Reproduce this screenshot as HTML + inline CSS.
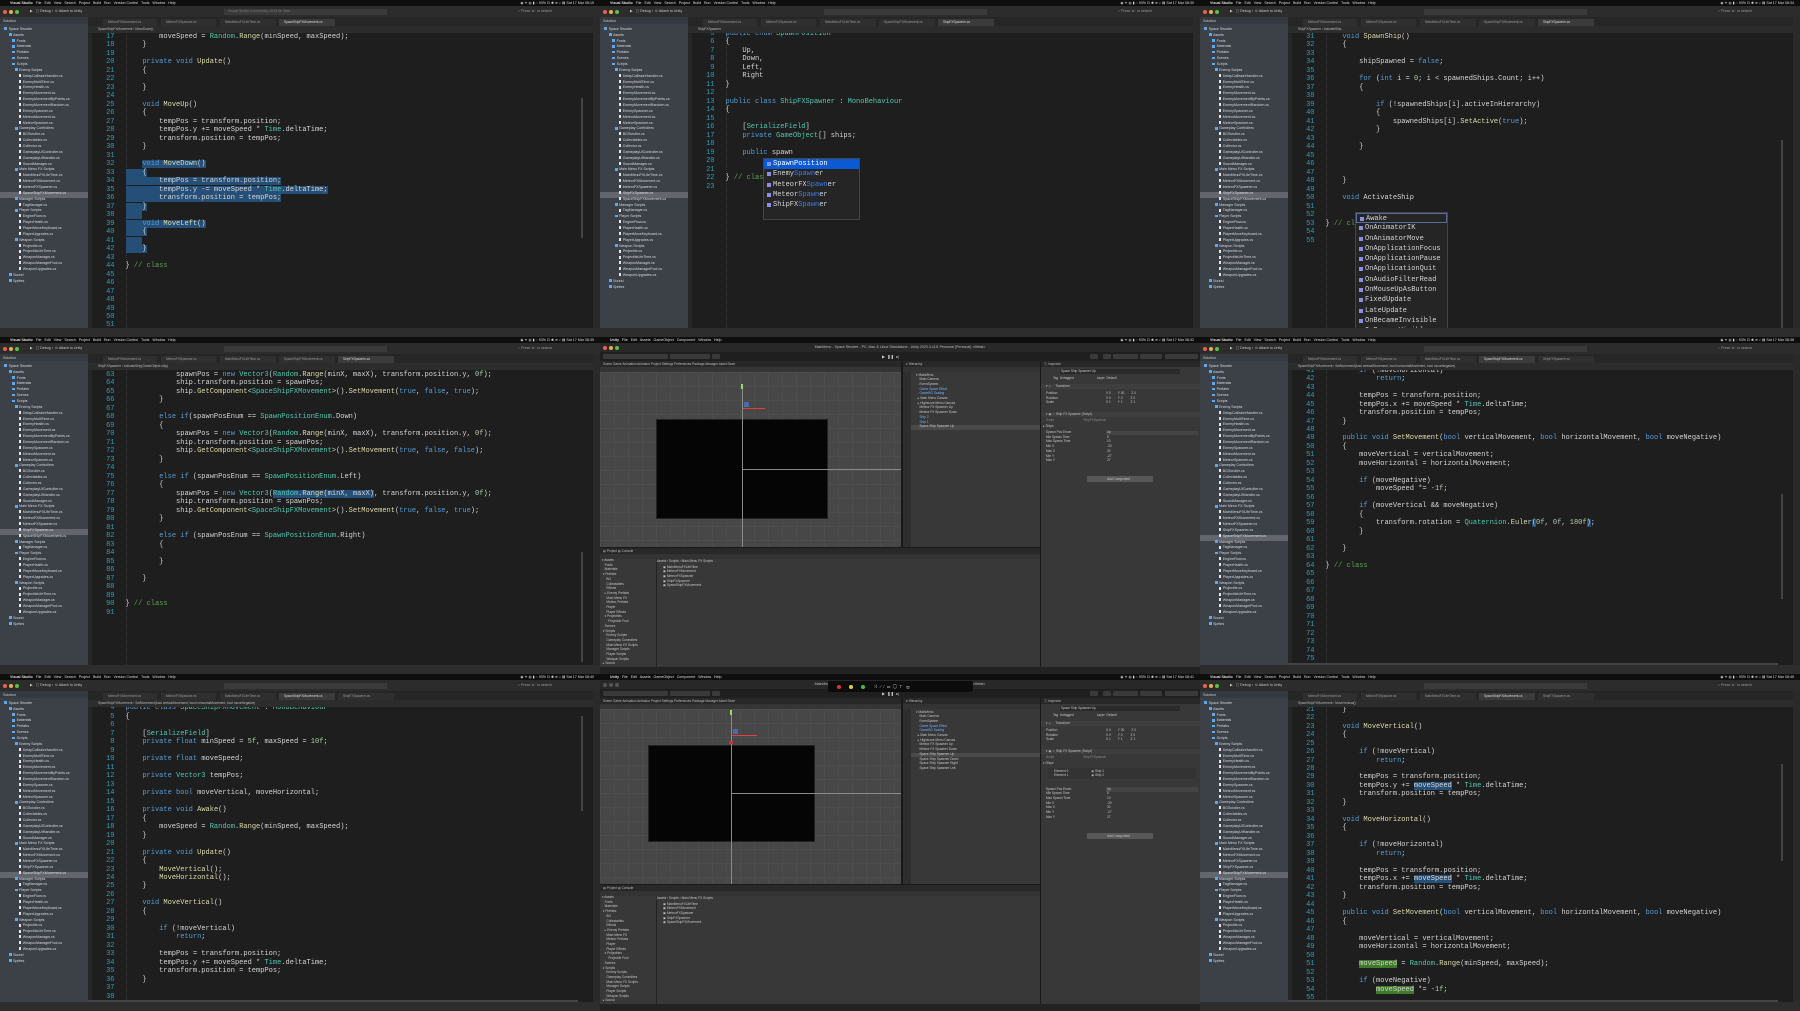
<!DOCTYPE html>
<html><head><meta charset="utf-8">
<style>
*{margin:0;padding:0;box-sizing:border-box}
body{width:1800px;height:1011px;background:#000;position:relative;overflow:hidden;font-family:"Liberation Sans",sans-serif}
.cell{position:absolute;width:600px;height:337px;overflow:hidden;background:#1e1e1e}
.a{position:absolute}
.mb{position:absolute;left:0;top:0;width:600px;height:6px;background:#0e0e0e;color:#ddd;font-size:3.6px;line-height:6px;white-space:pre;padding-left:8px}
.mb b{font-weight:bold}
.mbr{position:absolute;right:6px;top:0;font-size:3.6px;line-height:6px;color:#ddd}
.tb{position:absolute;left:0;top:6px;width:600px;height:11px;background:#2c2c2c}
.dot{position:absolute;width:4px;height:4px;border-radius:50%}
.r{background:#ec5f57}.y{background:#e0b33a}.g{background:#5bbf45}
.tiny{font-size:3.6px;color:#c8c8c8;white-space:pre;position:absolute}
.sp{position:absolute;left:0;top:17px;width:88px;height:311px;background:#3c4047}
.sph{position:absolute;left:0;top:0;width:88px;height:7px;background:#353a40}
.tree{position:absolute;left:0;top:9.8px;width:88px;font-size:3.6px;line-height:5.87px;color:#d6d9de;white-space:nowrap}
.tree div{height:5.87px}
.tree i{display:inline-block;width:3px;height:2.6px;background:#5fa8ee;margin-right:1.6px;vertical-align:-0.2px}
.tree i.d{background:#e6e6e6;width:2.2px;height:3px}
.l0{padding-left:4px}.l1{padding-left:8.5px}.l2{padding-left:12px}.l3{padding-left:14.5px}.l4{padding-left:19px}
.sel{position:absolute;left:0;width:88px;height:5.6px;background:#63676d}
.tabs{position:absolute;left:88px;top:17px;width:512px;height:9px;background:#262626}
.tab{position:absolute;top:2px;height:7px;background:#2f2f2f;font-size:3.2px;line-height:7px;color:#999;padding-left:5px}
.tab.on{background:#3b3b3b;color:#ddd}
.bc{position:absolute;left:88px;top:26px;width:505px;height:7px;background:#2c2c2c;font-size:3.2px;line-height:7px;color:#bbb;padding-left:10px}
.code{position:absolute;left:88px;top:33px;width:505px;height:295px;overflow:hidden;background:#1e1e1e}
.gut{position:absolute;left:0;top:0;width:4px;height:295px;background:#262626}
pre{position:absolute;font-family:"Liberation Mono",monospace;font-size:7.03px;line-height:8.48px;margin:0}
.ln{left:0;width:26.5px;text-align:right;color:#2f9dbd}
.src{left:37.5px;color:#d4d4d4}
.k{color:#569cd6}.t{color:#4ec9b0}.m{color:#dcdcaa}.c{color:#57a64a}.n{color:#b5cea8}
.s{background:#264f78}.hg{background:#3f7a2a}
.guide{position:absolute;top:0;width:0;height:295px;border-left:1px dotted #3a3a3a}
.rs{position:absolute;left:593px;top:17px;width:7px;height:311px;background:#2a2a2a}
.vsb{position:absolute;left:581px;width:2px;background:#444}
.st{position:absolute;left:0;top:328px;width:600px;height:9px;background:#2d2d2d}
.pop{position:absolute;background:#252526;border:1px solid #454545;font-family:"Liberation Mono",monospace;font-size:7px;color:#d4d4d4}
.pop div{height:10.3px;line-height:10.3px;padding-left:9px;position:relative}
.pop div:before{content:"";position:absolute;left:2.5px;top:3px;width:4px;height:4px;background:#8a8fe6}
.pop .hi{background:#0b5ad3;color:#fff}
.pop em{font-style:normal;color:#3b7de8}
/* unity */
.ucell{background:#383838}
.ut{position:absolute;left:0;top:6px;width:600px;height:9px;background:#282828;font-size:3.6px;line-height:9px;color:#bbb;text-align:center}
.utool{position:absolute;left:0;top:15px;width:600px;height:9px;background:#1f1f1f}
.ub{position:absolute;top:2px;height:5px;background:#3a3a3a;border-radius:1px}
.phead{position:absolute;height:6px;background:#282828;font-size:3.2px;line-height:6px;color:#bbb;padding-left:3px}
.scene{position:absolute;left:0;top:35px;width:301px;height:175px;background:#474747;overflow:hidden;
 background-image:linear-gradient(#4d4d4d 1px,transparent 1px),linear-gradient(90deg,#4d4d4d 1px,transparent 1px);background-size:14px 14px}
.game{position:absolute;background:#050505;border:1px solid #222}
.utx{position:absolute;font-size:3.2px;color:#c4c4c4;white-space:pre;line-height:4.7px}
.fld{position:absolute;height:4.5px;background:#2a2a2a}
</style></head><body>

<!-- ============ CELL 1 (0,0) ============ -->
<div class="cell" style="left:0;top:0">
 <div class="mb"><b>  Visual Studio</b>   File   Edit   View   Search   Project   Build   Run   Version Control   Tools   Window   Help</div>
 <div class="mbr">◉ ✦ ◍ ▮ ◌ 93% ⊡ ✱ ≋ ⌕ ▤  Sat 17 Mar 08:15</div>
 <div class="tb"><div class="dot r" style="left:3px;top:4px"></div><div class="dot y" style="left:9px;top:4px"></div><div class="dot g" style="left:15px;top:4px"></div>
  <div class="tiny" style="left:30px;top:3px">▶   ▢ Debug ›  ⊙ Attach to Unity</div>
  <div class="a" style="left:224px;top:3px;width:163px;height:6px;background:#3a3a3a"></div>
  <div class="tiny" style="left:228px;top:3px;color:#777">Visual Studio Community 2019 for Mac</div>
  <div class="tiny" style="left:518px;top:3px;color:#999">⌕ Press '⌘.' to search</div></div>
 <div class="sp"><div class="sph"><span class="tiny" style="left:3px;top:2px">Solution</span></div>
  <div class="sel" style="top:175px"></div>
  <div class="tree">
   <div class="l0"><i></i>Space Shooter</div><div class="l1"><i></i>Assets</div>
   <div class="l2"><i></i>Fonts</div><div class="l2"><i></i>Materials</div><div class="l2"><i></i>Prefabs</div><div class="l2"><i></i>Scenes</div><div class="l2"><i></i>Scripts</div>
   <div class="l3"><i></i>Enemy Scripts</div>
   <div class="l4"><i class="d"></i>DelayCollisionHandler.cs</div><div class="l4"><i class="d"></i>EnemyMultiTime.cs</div><div class="l4"><i class="d"></i>EnemyHealth.cs</div><div class="l4"><i class="d"></i>EnemyMovement.cs</div><div class="l4"><i class="d"></i>EnemyMovementByPoints.cs</div><div class="l4"><i class="d"></i>EnemyMovementRandom.cs</div><div class="l4"><i class="d"></i>EnemySpawner.cs</div><div class="l4"><i class="d"></i>MeteorMovement.cs</div><div class="l4"><i class="d"></i>MeteorSpawner.cs</div>
   <div class="l3"><i></i>Gameplay Controllers</div>
   <div class="l4"><i class="d"></i>BGScroller.cs</div><div class="l4"><i class="d"></i>Collectables.cs</div><div class="l4"><i class="d"></i>Collector.cs</div><div class="l4"><i class="d"></i>GameplayUIController.cs</div><div class="l4"><i class="d"></i>GameplayUIHandler.cs</div><div class="l4"><i class="d"></i>SoundManager.cs</div>
   <div class="l3"><i></i>Main Menu FX Scripts</div>
   <div class="l4"><i class="d"></i>MainMenuFXLifeTime.cs</div><div class="l4"><i class="d"></i>MeteorFXMovement.cs</div><div class="l4"><i class="d"></i>MeteorFXSpawner.cs</div><div class="l4"><i class="d"></i>SpaceShipFXMovement.cs</div>
   <div class="l3"><i></i>Manager Scripts</div><div class="l4"><i class="d"></i>TagManager.cs</div>
   <div class="l3"><i></i>Player Scripts</div>
   <div class="l4"><i class="d"></i>EngineFlow.cs</div><div class="l4"><i class="d"></i>PlayerHealth.cs</div><div class="l4"><i class="d"></i>PlayerMoveKeyboard.cs</div><div class="l4"><i class="d"></i>PlayerUpgrades.cs</div>
   <div class="l3"><i></i>Weapon Scripts</div>
   <div class="l4"><i class="d"></i>Projectile.cs</div><div class="l4"><i class="d"></i>ProjectileLifeTime.cs</div><div class="l4"><i class="d"></i>WeaponManager.cs</div><div class="l4"><i class="d"></i>WeaponManagerPool.cs</div><div class="l4"><i class="d"></i>WeaponUpgrades.cs</div>
   <div class="l1"><i></i>Sound</div><div class="l1"><i></i>Sprites</div>
  </div></div>
 <div class="tabs"><div class="tab" style="left:15px;width:54px">MeteorFXMovement.cs</div><div class="tab" style="left:73px;width:55px">MeteorFXSpawner.cs</div><div class="tab" style="left:132px;width:56px">MainMenuFXLifeTime.cs</div><div class="tab on" style="left:191px;width:56px">SpaceShipFXMovement.cs</div></div>
 <div class="bc">SpaceShipFXMovement  ›  MoveDown()</div>
 <div class="code"><div class="gut"></div><div class="guide" style="left:38px"></div>
<pre class="ln" style="top:0">17
18
19
20
21
22
23
24
25
26
27
28
29
30
31
32
33
34
35
36
37
38
39
40
41
42
43
44
45
46
47
48
49
50
51</pre>
<pre class="src" style="top:0">        moveSpeed = <span class="t">Random</span>.<span class="m">Range</span>(minSpeed, maxSpeed);
    }

    <span class="k">private</span> <span class="k">void</span> <span class="m">Update</span>()
    {

    }

    <span class="k">void</span> <span class="m">MoveUp</span>()
    {
        tempPos = transform.position;
        tempPos.y += moveSpeed * <span class="t">Time</span>.deltaTime;
        transform.position = tempPos;
    }

    <span class="s"><span class="k">void</span> <span class="m">MoveDown</span>()</span>
<span class="s">    {</span>
<span class="s">        tempPos = transform.position;</span>
<span class="s">        tempPos.y -= moveSpeed * <span class="t">Time</span>.deltaTime;</span>
<span class="s">        transform.position = tempPos;</span>
<span class="s">    }</span>
<span class="s">    </span>
<span class="s">    <span class="k">void</span> <span class="m">MoveLeft</span>()</span>
<span class="s">    {</span>
<span class="s">    </span>
<span class="s">    }</span>

} <span class="c">// class</span></pre></div>
 <div class="rs"></div><div class="vsb" style="top:98px;height:140px"></div>
 <div class="st"></div>
</div>

<!-- ============ CELL 2 (600,0) ============ -->
<div class="cell" style="left:600px;top:0">
 <div class="mb"><b>  Visual Studio</b>   File   Edit   View   Search   Project   Build   Run   Version Control   Tools   Window   Help</div>
 <div class="mbr">◉ ✦ ◍ ▮ ◌ 93% ⊡ ✱ ≋ ⌕ ▤  Sat 17 Mar 08:30</div>
 <div class="tb"><div class="dot r" style="left:3px;top:4px"></div><div class="dot y" style="left:9px;top:4px"></div><div class="dot g" style="left:15px;top:4px"></div>
  <div class="tiny" style="left:30px;top:3px">▶   ▢ Debug ›  ⊙ Attach to Unity</div>
  <div class="a" style="left:224px;top:3px;width:163px;height:6px;background:#3a3a3a"></div>
  <div class="tiny" style="left:518px;top:3px;color:#999">⌕ Press '⌘.' to search</div></div>
 <div class="sp"><div class="sph"><span class="tiny" style="left:3px;top:2px">Solution</span></div>
  <div class="sel" style="top:175px"></div>
  <div class="tree">
   <div class="l0"><i></i>Space Shooter</div><div class="l1"><i></i>Assets</div>
   <div class="l2"><i></i>Fonts</div><div class="l2"><i></i>Materials</div><div class="l2"><i></i>Prefabs</div><div class="l2"><i></i>Scenes</div><div class="l2"><i></i>Scripts</div>
   <div class="l3"><i></i>Enemy Scripts</div>
   <div class="l4"><i class="d"></i>DelayCollisionHandler.cs</div><div class="l4"><i class="d"></i>EnemyMultiTime.cs</div><div class="l4"><i class="d"></i>EnemyHealth.cs</div><div class="l4"><i class="d"></i>EnemyMovement.cs</div><div class="l4"><i class="d"></i>EnemyMovementByPoints.cs</div><div class="l4"><i class="d"></i>EnemyMovementRandom.cs</div><div class="l4"><i class="d"></i>EnemySpawner.cs</div><div class="l4"><i class="d"></i>MeteorMovement.cs</div><div class="l4"><i class="d"></i>MeteorSpawner.cs</div>
   <div class="l3"><i></i>Gameplay Controllers</div>
   <div class="l4"><i class="d"></i>BGScroller.cs</div><div class="l4"><i class="d"></i>Collectables.cs</div><div class="l4"><i class="d"></i>Collector.cs</div><div class="l4"><i class="d"></i>GameplayUIController.cs</div><div class="l4"><i class="d"></i>GameplayUIHandler.cs</div><div class="l4"><i class="d"></i>SoundManager.cs</div>
   <div class="l3"><i></i>Main Menu FX Scripts</div>
   <div class="l4"><i class="d"></i>MainMenuFXLifeTime.cs</div><div class="l4"><i class="d"></i>MeteorFXMovement.cs</div><div class="l4"><i class="d"></i>MeteorFXSpawner.cs</div><div class="l4"><i class="d"></i>ShipFXSpawner.cs</div><div class="l4"><i class="d"></i>SpaceShipFXMovement.cs</div>
   <div class="l3"><i></i>Manager Scripts</div><div class="l4"><i class="d"></i>TagManager.cs</div>
   <div class="l3"><i></i>Player Scripts</div>
   <div class="l4"><i class="d"></i>EngineFlow.cs</div><div class="l4"><i class="d"></i>PlayerHealth.cs</div><div class="l4"><i class="d"></i>PlayerMoveKeyboard.cs</div><div class="l4"><i class="d"></i>PlayerUpgrades.cs</div>
   <div class="l3"><i></i>Weapon Scripts</div>
   <div class="l4"><i class="d"></i>Projectile.cs</div><div class="l4"><i class="d"></i>ProjectileLifeTime.cs</div><div class="l4"><i class="d"></i>WeaponManager.cs</div><div class="l4"><i class="d"></i>WeaponManagerPool.cs</div><div class="l4"><i class="d"></i>WeaponUpgrades.cs</div>
   <div class="l1"><i></i>Sound</div><div class="l1"><i></i>Sprites</div>
  </div></div>
 <div class="tabs"><div class="tab" style="left:15px;width:54px">MeteorFXMovement.cs</div><div class="tab" style="left:73px;width:55px">MeteorFXSpawner.cs</div><div class="tab" style="left:132px;width:56px">MainMenuFXLifeTime.cs</div><div class="tab" style="left:191px;width:56px">SpaceShipFXMovement.cs</div><div class="tab on" style="left:250px;width:56px">ShipFXSpawner.cs</div></div>
 <div class="bc">ShipFXSpawner</div>
 <div class="code"><div class="gut"></div><div class="guide" style="left:38px"></div>
<pre class="ln" style="top:-3px">5
6
7
8
9
10
11
12
13
14
15
16
17
18
19
20
21
22
23</pre>
<pre class="src" style="top:-3px"><span class="k">public</span> <span class="k">enum</span> <span class="t">SpawnPosition</span>
{
    Up,
    Down,
    Left,
    Right
}

<span class="k">public</span> <span class="k">class</span> <span class="t">ShipFXSpawner</span> : <span class="t">MonoBehaviour</span>
{

    [<span class="t">SerializeField</span>]
    <span class="k">private</span> <span class="t">GameObject</span>[] ships;

    <span class="k">public</span> spawn


} <span class="c">// class</span>
</pre></div>
 <div class="pop" style="left:163px;top:158px;width:97px;height:62px">
  <div class="hi">SpawnPosition</div><div>Enemy<em>Spawn</em>er</div><div>MeteorFX<em>Spawn</em>er</div><div>Meteor<em>Spawn</em>er</div><div>ShipFX<em>Spawn</em>er</div>
 </div>
 <div class="rs"></div>
 <div class="st"></div>
</div>

<!-- ============ CELL 3 (1200,0) ============ -->
<div class="cell" style="left:1200px;top:0">
 <div class="mb"><b>  Visual Studio</b>   File   Edit   View   Search   Project   Build   Run   Version Control   Tools   Window   Help</div>
 <div class="mbr">◉ ✦ ◍ ▮ ◌ 93% ⊡ ✱ ≋ ⌕ ▤  Sat 17 Mar 08:34</div>
 <div class="tb"><div class="dot r" style="left:3px;top:4px"></div><div class="dot y" style="left:9px;top:4px"></div><div class="dot g" style="left:15px;top:4px"></div>
  <div class="tiny" style="left:30px;top:3px">▶   ▢ Debug ›  ⊙ Attach to Unity</div>
  <div class="a" style="left:224px;top:3px;width:163px;height:6px;background:#3a3a3a"></div>
  <div class="tiny" style="left:518px;top:3px;color:#999">⌕ Press '⌘.' to search</div></div>
 <div class="sp"><div class="sph"><span class="tiny" style="left:3px;top:2px">Solution</span></div>
  <div class="sel" style="top:175px"></div>
  <div class="tree">
   <div class="l0"><i></i>Space Shooter</div><div class="l1"><i></i>Assets</div>
   <div class="l2"><i></i>Fonts</div><div class="l2"><i></i>Materials</div><div class="l2"><i></i>Prefabs</div><div class="l2"><i></i>Scenes</div><div class="l2"><i></i>Scripts</div>
   <div class="l3"><i></i>Enemy Scripts</div>
   <div class="l4"><i class="d"></i>DelayCollisionHandler.cs</div><div class="l4"><i class="d"></i>EnemyMultiTime.cs</div><div class="l4"><i class="d"></i>EnemyHealth.cs</div><div class="l4"><i class="d"></i>EnemyMovement.cs</div><div class="l4"><i class="d"></i>EnemyMovementByPoints.cs</div><div class="l4"><i class="d"></i>EnemyMovementRandom.cs</div><div class="l4"><i class="d"></i>EnemySpawner.cs</div><div class="l4"><i class="d"></i>MeteorMovement.cs</div><div class="l4"><i class="d"></i>MeteorSpawner.cs</div>
   <div class="l3"><i></i>Gameplay Controllers</div>
   <div class="l4"><i class="d"></i>BGScroller.cs</div><div class="l4"><i class="d"></i>Collectables.cs</div><div class="l4"><i class="d"></i>Collector.cs</div><div class="l4"><i class="d"></i>GameplayUIController.cs</div><div class="l4"><i class="d"></i>GameplayUIHandler.cs</div><div class="l4"><i class="d"></i>SoundManager.cs</div>
   <div class="l3"><i></i>Main Menu FX Scripts</div>
   <div class="l4"><i class="d"></i>MainMenuFXLifeTime.cs</div><div class="l4"><i class="d"></i>MeteorFXMovement.cs</div><div class="l4"><i class="d"></i>MeteorFXSpawner.cs</div><div class="l4"><i class="d"></i>ShipFXSpawner.cs</div><div class="l4"><i class="d"></i>SpaceShipFXMovement.cs</div>
   <div class="l3"><i></i>Manager Scripts</div><div class="l4"><i class="d"></i>TagManager.cs</div>
   <div class="l3"><i></i>Player Scripts</div>
   <div class="l4"><i class="d"></i>EngineFlow.cs</div><div class="l4"><i class="d"></i>PlayerHealth.cs</div><div class="l4"><i class="d"></i>PlayerMoveKeyboard.cs</div><div class="l4"><i class="d"></i>PlayerUpgrades.cs</div>
   <div class="l3"><i></i>Weapon Scripts</div>
   <div class="l4"><i class="d"></i>Projectile.cs</div><div class="l4"><i class="d"></i>ProjectileLifeTime.cs</div><div class="l4"><i class="d"></i>WeaponManager.cs</div><div class="l4"><i class="d"></i>WeaponManagerPool.cs</div><div class="l4"><i class="d"></i>WeaponUpgrades.cs</div>
   <div class="l1"><i></i>Sound</div><div class="l1"><i></i>Sprites</div>
  </div></div>
 <div class="tabs"><div class="tab" style="left:15px;width:54px">MeteorFXMovement.cs</div><div class="tab" style="left:73px;width:55px">MeteorFXSpawner.cs</div><div class="tab" style="left:132px;width:56px">MainMenuFXLifeTime.cs</div><div class="tab" style="left:191px;width:56px">SpaceShipFXMovement.cs</div><div class="tab on" style="left:250px;width:56px">ShipFXSpawner.cs</div></div>
 <div class="bc">ShipFXSpawner  ›  ActivateShip</div>
 <div class="code"><div class="gut"></div><div class="guide" style="left:38px"></div>
<pre class="ln" style="top:0">31
32
33
34
35
36
37
38
39
40
41
42
43
44
45
46
47
48
49
50
51
52
53
54
55</pre>
<pre class="src" style="top:0">
    <span class="k">void</span> <span class="m">SpawnShip</span>()
    {

        shipSpawned = <span class="k">false</span>;

        <span class="k">for</span> (<span class="k">int</span> i = <span class="n">0</span>; i &lt; spawnedShips.Count; i++)
        {

            <span class="k">if</span> (!spawnedShips[i].activeInHierarchy)
            {
                spawnedShips[i].<span class="m">SetActive</span>(<span class="k">true</span>);
            }

        }



    }

    <span class="k">void</span> ActivateShip


} <span class="c">// cl</span>
</pre></div>
 <div class="pop" style="left:155px;top:212px;width:93px;height:130px">
  <div style="border:1px solid #5a6a9a">Awake</div><div>OnAnimatorIK</div><div>OnAnimatorMove</div><div>OnApplicationFocus</div><div>OnApplicationPause</div><div>OnApplicationQuit</div><div>OnAudioFilterRead</div><div>OnMouseUpAsButton</div><div>FixedUpdate</div><div>LateUpdate</div><div>OnBecameInvisible</div><div>OnBecameVisible</div>
 </div>
 <div class="rs"></div><div class="vsb" style="top:140px;height:190px"></div>
 <div class="st"></div>
</div>

<!-- ============ CELL 4 (0,337) ============ -->
<div class="cell" style="left:0;top:337px">
 <div class="mb"><b>  Visual Studio</b>   File   Edit   View   Search   Project   Build   Run   Version Control   Tools   Window   Help</div>
 <div class="mbr">◉ ✦ ◍ ▮ ◌ 93% ⊡ ✱ ≋ ⌕ ▤  Sat 17 Mar 08:35</div>
 <div class="tb"><div class="dot r" style="left:3px;top:4px"></div><div class="dot y" style="left:9px;top:4px"></div><div class="dot g" style="left:15px;top:4px"></div>
  <div class="tiny" style="left:30px;top:3px">▶   ▢ Debug ›  ⊙ Attach to Unity</div>
  <div class="a" style="left:224px;top:3px;width:163px;height:6px;background:#3a3a3a"></div>
  <div class="tiny" style="left:518px;top:3px;color:#999">⌕ Press '⌘.' to search</div></div>
 <div class="sp"><div class="sph"><span class="tiny" style="left:3px;top:2px">Solution</span></div>
  <div class="sel" style="top:175px"></div>
  <div class="tree">
   <div class="l0"><i></i>Space Shooter</div><div class="l1"><i></i>Assets</div>
   <div class="l2"><i></i>Fonts</div><div class="l2"><i></i>Materials</div><div class="l2"><i></i>Prefabs</div><div class="l2"><i></i>Scenes</div><div class="l2"><i></i>Scripts</div>
   <div class="l3"><i></i>Enemy Scripts</div>
   <div class="l4"><i class="d"></i>DelayCollisionHandler.cs</div><div class="l4"><i class="d"></i>EnemyMultiTime.cs</div><div class="l4"><i class="d"></i>EnemyHealth.cs</div><div class="l4"><i class="d"></i>EnemyMovement.cs</div><div class="l4"><i class="d"></i>EnemyMovementByPoints.cs</div><div class="l4"><i class="d"></i>EnemyMovementRandom.cs</div><div class="l4"><i class="d"></i>EnemySpawner.cs</div><div class="l4"><i class="d"></i>MeteorMovement.cs</div><div class="l4"><i class="d"></i>MeteorSpawner.cs</div>
   <div class="l3"><i></i>Gameplay Controllers</div>
   <div class="l4"><i class="d"></i>BGScroller.cs</div><div class="l4"><i class="d"></i>Collectables.cs</div><div class="l4"><i class="d"></i>Collector.cs</div><div class="l4"><i class="d"></i>GameplayUIController.cs</div><div class="l4"><i class="d"></i>GameplayUIHandler.cs</div><div class="l4"><i class="d"></i>SoundManager.cs</div>
   <div class="l3"><i></i>Main Menu FX Scripts</div>
   <div class="l4"><i class="d"></i>MainMenuFXLifeTime.cs</div><div class="l4"><i class="d"></i>MeteorFXMovement.cs</div><div class="l4"><i class="d"></i>MeteorFXSpawner.cs</div><div class="l4"><i class="d"></i>ShipFXSpawner.cs</div><div class="l4"><i class="d"></i>SpaceShipFXMovement.cs</div>
   <div class="l3"><i></i>Manager Scripts</div><div class="l4"><i class="d"></i>TagManager.cs</div>
   <div class="l3"><i></i>Player Scripts</div>
   <div class="l4"><i class="d"></i>EngineFlow.cs</div><div class="l4"><i class="d"></i>PlayerHealth.cs</div><div class="l4"><i class="d"></i>PlayerMoveKeyboard.cs</div><div class="l4"><i class="d"></i>PlayerUpgrades.cs</div>
   <div class="l3"><i></i>Weapon Scripts</div>
   <div class="l4"><i class="d"></i>Projectile.cs</div><div class="l4"><i class="d"></i>ProjectileLifeTime.cs</div><div class="l4"><i class="d"></i>WeaponManager.cs</div><div class="l4"><i class="d"></i>WeaponManagerPool.cs</div><div class="l4"><i class="d"></i>WeaponUpgrades.cs</div>
   <div class="l1"><i></i>Sound</div><div class="l1"><i></i>Sprites</div>
  </div></div>
 <div class="tabs"><div class="tab" style="left:15px;width:54px">MeteorFXMovement.cs</div><div class="tab" style="left:73px;width:55px">MeteorFXSpawner.cs</div><div class="tab" style="left:132px;width:56px">MainMenuFXLifeTime.cs</div><div class="tab" style="left:191px;width:56px">SpaceShipFXMovement.cs</div><div class="tab on" style="left:250px;width:56px">ShipFXSpawner.cs</div></div>
 <div class="bc">ShipFXSpawner  ›  ActivateShip(GameObject ship)</div>
 <div class="code"><div class="gut"></div><div class="guide" style="left:38px"></div>
<pre class="ln" style="top:1px">63
64
65
66
67
68
69
70
71
72
73
74
75
76
77
78
79
80
81
82
83
84
85
86
87
88
89
90
91</pre>
<pre class="src" style="top:1px">            spawnPos = <span class="k">new</span> <span class="t">Vector3</span>(<span class="t">Random</span>.<span class="m">Range</span>(minX, maxX), transform.position.y, <span class="n">0f</span>);
            ship.transform.position = spawnPos;
            ship.<span class="m">GetComponent</span>&lt;<span class="t">SpaceShipFXMovement</span>&gt;().<span class="m">SetMovement</span>(<span class="k">true</span>, <span class="k">false</span>, <span class="k">true</span>);
        }

        <span class="k">else</span> <span class="k">if</span>(spawnPosEnum == <span class="t">SpawnPositionEnum</span>.Down)
        {
            spawnPos = <span class="k">new</span> <span class="t">Vector3</span>(<span class="t">Random</span>.<span class="m">Range</span>(minX, maxX), transform.position.y, <span class="n">0f</span>);
            ship.transform.position = spawnPos;
            ship.<span class="m">GetComponent</span>&lt;<span class="t">SpaceShipFXMovement</span>&gt;().<span class="m">SetMovement</span>(<span class="k">true</span>, <span class="k">false</span>, <span class="k">false</span>);
        }

        <span class="k">else</span> <span class="k">if</span> (spawnPosEnum == <span class="t">SpawnPositionEnum</span>.Left)
        {
            spawnPos = <span class="k">new</span> <span class="t">Vector3</span>(<span class="s"><span class="t">Random</span>.<span class="m">Range</span>(minX, maxX)</span>, transform.position.y, <span class="n">0f</span>);
            ship.transform.position = spawnPos;
            ship.<span class="m">GetComponent</span>&lt;<span class="t">SpaceShipFXMovement</span>&gt;().<span class="m">SetMovement</span>(<span class="k">true</span>, <span class="k">false</span>, <span class="k">true</span>);
        }

        <span class="k">else</span> <span class="k">if</span> (spawnPosEnum == <span class="t">SpawnPositionEnum</span>.Right)
        {

        }

    }


} <span class="c">// class</span>
</pre></div>
 <div class="rs"></div><div class="vsb" style="top:215px;height:110px"></div>
 <div class="st"></div>
</div>

<!-- ============ CELL 5 UNITY (600,337) ============ -->
<div class="cell ucell" style="left:600px;top:337px">
 <div class="mb"><b>  Unity</b>   File   Edit   Assets   GameObject   Component   Window   Help</div>
 <div class="mbr">◉ ✦ ◍ ▮ ◌ 93% ⊡ ✱ ≋ ⌕ ▤  Sat 17 Mar 08:32</div>
 <div class="ut">MainMenu - Space Shooter - PC, Mac &amp; Linux Standalone - Unity 2020.3.11f1 Personal (Personal) &lt;Metal&gt;</div>
 <div class="dot r" style="left:3px;top:9px"></div><div class="dot y" style="left:9px;top:9px"></div><div class="dot g" style="left:15px;top:9px"></div>
 <div class="utool"><div class="ub" style="left:3px;width:65px"></div><div class="ub" style="left:70px;width:40px"></div><div class="ub" style="left:112px;width:8px"></div>
  <div class="tiny" style="left:282px;top:2px;font-size:4px">▶  ❚❚  ▸|</div>
  <div class="ub" style="left:490px;width:8px"></div><div class="ub" style="left:503px;width:8px"></div><div class="ub" style="left:513px;width:25px"></div><div class="ub" style="left:540px;width:22px"></div><div class="ub" style="left:565px;width:33px"></div></div>
 <div class="phead" style="left:0;top:24px;width:301px">Scene   Game   Animation   Animator   Project Settings   Preferences   Package Manager   Asset Store</div>
 <div class="a" style="left:0;top:30px;width:301px;height:5px;background:#353535"></div>
 <div class="scene">
  <div class="game" style="left:56px;top:47px;width:172px;height:100px"></div>
  <div class="a" style="left:142px;top:12px;width:1px;height:175px;background:#8a8a8a"></div>
  <div class="a" style="left:142px;top:97px;width:160px;height:1px;background:#8a8a8a"></div>
  <div class="a" style="left:141px;top:12px;width:2px;height:5px;background:#8ee05a"></div>
  <div class="a" style="left:143px;top:36px;width:22px;height:1px;background:#e04040"></div>
  <div class="a" style="left:144px;top:30px;width:5px;height:5px;background:#4a6ab0"></div>
 </div>
 <div class="a" style="left:301px;top:24px;width:2px;height:186px;background:#191919"></div>
 <div class="phead" style="left:303px;top:24px;width:137px">≡ Hierarchy</div>
 <div class="a" style="left:303px;top:30px;width:137px;height:5px;background:#333"></div>
 <div class="a" style="left:303px;top:35px;width:8px;height:175px;background:#2e2e2e"></div>
 <div class="a" style="left:311px;top:88px;width:129px;height:4.7px;background:#4a4a4a"></div>
 <div class="utx" style="left:316px;top:35.5px">▾ MainMenu
    Main Camera
    EventSystem
    <span style="color:#6fb0ff">Game Space Effect</span>
    <span style="color:#6fb0ff">GameBG Scaling</span>
  ▸ Main Menu Canvas
  ▸ Highscore Menu Canvas
    Meteor FX Spawner Up
    Meteor FX Spawner Down
    <span style="color:#6fb0ff">Ship 2</span>
    <span style="color:#6fb0ff">Ship 1</span>
    Space Ship Spawner Up</div>
 <div class="a" style="left:440px;top:24px;width:1px;height:306px;background:#191919"></div>
 <div class="phead" style="left:441px;top:24px;width:159px">ⓘ Inspector</div>
 <div class="fld" style="left:460px;top:32px;width:120px"></div><div class="utx" style="left:461px;top:32px">Space Ship Spawner Up</div>
 <div class="utx" style="left:453px;top:39px">Tag  Untagged                          Layer  Default</div>
 <div class="a" style="left:441px;top:47px;width:159px;height:5px;background:#3e3e3e"></div><div class="utx" style="left:446px;top:47px">▾ ⊹     Transform</div>
 <div class="utx" style="left:446px;top:54px">Position
Rotation
Scale</div>
 <div class="utx" style="left:506px;top:54px">X 0        Y 30        Z 0
X 0        Y 0         Z 0
X 1        Y 1         Z 1</div>
 <div class="a" style="left:441px;top:74.5px;width:159px;height:5px;background:#3e3e3e"></div><div class="utx" style="left:446px;top:74.5px">▾ ▣ ✓ Ship FX Spawner (Script)</div>
 <div class="utx" style="left:446px;top:81px;color:#888">Script                                 ShipFXSpawner</div>
 <div class="utx" style="left:443px;top:87px">▸ Ships</div>
 <div class="utx" style="left:446px;top:93px">Spawn Pos Enum
Min Spawn Time
Max Spawn Time
Min X
Max X
Min Y
Max Y</div>
 <div class="fld" style="left:506px;top:93.5px;width:92px;background:#444"></div>
 <div class="utx" style="left:507px;top:93px">Up
5
10
-30
30
-27
27</div>
 <div class="a" style="left:487px;top:139px;width:66px;height:6px;background:#585858;border-radius:1px"></div><div class="utx" style="left:507px;top:139.5px">Add Component</div>
 <div class="a" style="left:0;top:210px;width:440px;height:1px;background:#191919"></div>
 <div class="phead" style="left:0;top:211px;width:440px">▤ Project   ▤ Console</div>
 <div class="a" style="left:0;top:217px;width:440px;height:5px;background:#333"></div>
 <div class="a" style="left:56px;top:222px;width:1px;height:108px;background:#222"></div>
 <div class="utx" style="left:2px;top:221px">▾ Assets
   Fonts
   Materials
 ▾ Prefabs
     BG
     Collectables
     Effects
   ▸ Enemy Prefabs
     Main Menu FX
     Meteor Prefabs
     Player
     Player Effects
   ▾ Projectiles
       Projectile Pool
   Scenes
 ▾ Scripts
     Enemy Scripts
     Gameplay Controllers
     Main Menu FX Scripts
     Manager Scripts
     Player Scripts
     Weapon Scripts
 ▸ Sound</div>
 <div class="utx" style="left:55px;top:222px">  Assets › Scripts › Main Menu FX Scripts</div>
 <div class="utx" style="left:63px;top:227.5px">▣ MainMenuFXLifeTime
▣ MeteorFXMovement
▣ MeteorFXSpawner
▣ ShipFXSpawner
▣ SpaceShipFXMovement</div>
 <div class="a" style="left:0;top:330px;width:600px;height:7px;background:#222"></div>
</div>

<!-- ============ CELL 6 (1200,337) ============ -->
<div class="cell" style="left:1200px;top:337px">
 <div class="mb"><b>  Visual Studio</b>   File   Edit   View   Search   Project   Build   Run   Version Control   Tools   Window   Help</div>
 <div class="mbr">◉ ✦ ◍ ▮ ◌ 93% ⊡ ✱ ≋ ⌕ ▤  Sat 17 Mar 08:38</div>
 <div class="tb"><div class="dot r" style="left:3px;top:4px"></div><div class="dot y" style="left:9px;top:4px"></div><div class="dot g" style="left:15px;top:4px"></div>
  <div class="tiny" style="left:30px;top:3px">▶   ▢ Debug ›  ⊙ Attach to Unity</div>
  <div class="a" style="left:224px;top:3px;width:163px;height:6px;background:#3a3a3a"></div>
  <div class="tiny" style="left:518px;top:3px;color:#999">⌕ Press '⌘.' to search</div></div>
 <div class="sp"><div class="sph"><span class="tiny" style="left:3px;top:2px">Solution</span></div>
  <div class="sel" style="top:181px"></div>
  <div class="tree">
   <div class="l0"><i></i>Space Shooter</div><div class="l1"><i></i>Assets</div>
   <div class="l2"><i></i>Fonts</div><div class="l2"><i></i>Materials</div><div class="l2"><i></i>Prefabs</div><div class="l2"><i></i>Scenes</div><div class="l2"><i></i>Scripts</div>
   <div class="l3"><i></i>Enemy Scripts</div>
   <div class="l4"><i class="d"></i>DelayCollisionHandler.cs</div><div class="l4"><i class="d"></i>EnemyMultiTime.cs</div><div class="l4"><i class="d"></i>EnemyHealth.cs</div><div class="l4"><i class="d"></i>EnemyMovement.cs</div><div class="l4"><i class="d"></i>EnemyMovementByPoints.cs</div><div class="l4"><i class="d"></i>EnemyMovementRandom.cs</div><div class="l4"><i class="d"></i>EnemySpawner.cs</div><div class="l4"><i class="d"></i>MeteorMovement.cs</div><div class="l4"><i class="d"></i>MeteorSpawner.cs</div>
   <div class="l3"><i></i>Gameplay Controllers</div>
   <div class="l4"><i class="d"></i>BGScroller.cs</div><div class="l4"><i class="d"></i>Collectables.cs</div><div class="l4"><i class="d"></i>Collector.cs</div><div class="l4"><i class="d"></i>GameplayUIController.cs</div><div class="l4"><i class="d"></i>GameplayUIHandler.cs</div><div class="l4"><i class="d"></i>SoundManager.cs</div>
   <div class="l3"><i></i>Main Menu FX Scripts</div>
   <div class="l4"><i class="d"></i>MainMenuFXLifeTime.cs</div><div class="l4"><i class="d"></i>MeteorFXMovement.cs</div><div class="l4"><i class="d"></i>MeteorFXSpawner.cs</div><div class="l4"><i class="d"></i>ShipFXSpawner.cs</div><div class="l4"><i class="d"></i>SpaceShipFXMovement.cs</div>
   <div class="l3"><i></i>Manager Scripts</div><div class="l4"><i class="d"></i>TagManager.cs</div>
   <div class="l3"><i></i>Player Scripts</div>
   <div class="l4"><i class="d"></i>EngineFlow.cs</div><div class="l4"><i class="d"></i>PlayerHealth.cs</div><div class="l4"><i class="d"></i>PlayerMoveKeyboard.cs</div><div class="l4"><i class="d"></i>PlayerUpgrades.cs</div>
   <div class="l3"><i></i>Weapon Scripts</div>
   <div class="l4"><i class="d"></i>Projectile.cs</div><div class="l4"><i class="d"></i>ProjectileLifeTime.cs</div><div class="l4"><i class="d"></i>WeaponManager.cs</div><div class="l4"><i class="d"></i>WeaponManagerPool.cs</div><div class="l4"><i class="d"></i>WeaponUpgrades.cs</div>
   <div class="l1"><i></i>Sound</div><div class="l1"><i></i>Sprites</div>
  </div></div>
 <div class="tabs"><div class="tab" style="left:15px;width:54px">MeteorFXMovement.cs</div><div class="tab" style="left:73px;width:55px">MeteorFXSpawner.cs</div><div class="tab" style="left:132px;width:56px">MainMenuFXLifeTime.cs</div><div class="tab on" style="left:191px;width:56px">SpaceShipFXMovement.cs</div><div class="tab" style="left:250px;width:56px">ShipFXSpawner.cs</div></div>
 <div class="bc">SpaceShipFXMovement  ›  SetMovement(bool verticalMovement, bool horizontalMovement, bool moveNegative)</div>
 <div class="code"><div class="gut"></div><div class="guide" style="left:38px"></div>
<pre class="ln" style="top:-3.4px">41
42
43
44
45
46
47
48
49
50
51
52
53
54
55
56
57
58
59
60
61
62
63
64
65
66
67
68
69
70
71
72
73
74
75</pre>
<pre class="src" style="top:-3.4px">
        <span class="k">if</span> (!moveHorizontal)
            <span class="k">return</span>;

        tempPos = transform.position;
        tempPos.x += moveSpeed * <span class="t">Time</span>.deltaTime;
        transform.position = tempPos;
    }

    <span class="k">public</span> <span class="k">void</span> <span class="m">SetMovement</span>(<span class="k">bool</span> verticalMovement, <span class="k">bool</span> horizontalMovement, <span class="k">bool</span> moveNegative)
    {
        moveVertical = verticalMovement;
        moveHorizontal = horizontalMovement;

        <span class="k">if</span> (moveNegative)
            moveSpeed *= -<span class="n">1f</span>;

        <span class="k">if</span> (moveVertical &amp;&amp; moveNegative)
        {
            transform.rotation = <span class="t">Quaternion</span>.<span class="m">Euler</span><span class="s">(</span><span class="n">0f</span>, <span class="n">0f</span>, <span class="n">180f</span><span class="s">)</span>;
        }

    }

} <span class="c">// class</span>
</pre></div>
 <div class="rs"></div><div class="vsb" style="top:157px;height:105px"></div>
 <div class="a" style="left:88px;top:326px;width:490px;height:2px;background:#444"></div>
 <div class="st"></div>
</div>

<!-- ============ CELL 7 (0,674) ============ -->
<div class="cell" style="left:0;top:674px">
 <div class="mb"><b>  Visual Studio</b>   File   Edit   View   Search   Project   Build   Run   Version Control   Tools   Window   Help</div>
 <div class="mbr">◉ ✦ ◍ ▮ ◌ 93% ⊡ ✱ ≋ ⌕ ▤  Sat 17 Mar 08:40</div>
 <div class="tb"><div class="dot r" style="left:3px;top:4px"></div><div class="dot y" style="left:9px;top:4px"></div><div class="dot g" style="left:15px;top:4px"></div>
  <div class="tiny" style="left:30px;top:3px">▶   ▢ Debug ›  ⊙ Attach to Unity</div>
  <div class="a" style="left:224px;top:3px;width:163px;height:6px;background:#3a3a3a"></div>
  <div class="tiny" style="left:518px;top:3px;color:#999">⌕ Press '⌘.' to search</div></div>
 <div class="sp"><div class="sph"><span class="tiny" style="left:3px;top:2px">Solution</span></div>
  <div class="sel" style="top:181px"></div>
  <div class="tree">
   <div class="l0"><i></i>Space Shooter</div><div class="l1"><i></i>Assets</div>
   <div class="l2"><i></i>Fonts</div><div class="l2"><i></i>Materials</div><div class="l2"><i></i>Prefabs</div><div class="l2"><i></i>Scenes</div><div class="l2"><i></i>Scripts</div>
   <div class="l3"><i></i>Enemy Scripts</div>
   <div class="l4"><i class="d"></i>DelayCollisionHandler.cs</div><div class="l4"><i class="d"></i>EnemyMultiTime.cs</div><div class="l4"><i class="d"></i>EnemyHealth.cs</div><div class="l4"><i class="d"></i>EnemyMovement.cs</div><div class="l4"><i class="d"></i>EnemyMovementByPoints.cs</div><div class="l4"><i class="d"></i>EnemyMovementRandom.cs</div><div class="l4"><i class="d"></i>EnemySpawner.cs</div><div class="l4"><i class="d"></i>MeteorMovement.cs</div><div class="l4"><i class="d"></i>MeteorSpawner.cs</div>
   <div class="l3"><i></i>Gameplay Controllers</div>
   <div class="l4"><i class="d"></i>BGScroller.cs</div><div class="l4"><i class="d"></i>Collectables.cs</div><div class="l4"><i class="d"></i>Collector.cs</div><div class="l4"><i class="d"></i>GameplayUIController.cs</div><div class="l4"><i class="d"></i>GameplayUIHandler.cs</div><div class="l4"><i class="d"></i>SoundManager.cs</div>
   <div class="l3"><i></i>Main Menu FX Scripts</div>
   <div class="l4"><i class="d"></i>MainMenuFXLifeTime.cs</div><div class="l4"><i class="d"></i>MeteorFXMovement.cs</div><div class="l4"><i class="d"></i>MeteorFXSpawner.cs</div><div class="l4"><i class="d"></i>ShipFXSpawner.cs</div><div class="l4"><i class="d"></i>SpaceShipFXMovement.cs</div>
   <div class="l3"><i></i>Manager Scripts</div><div class="l4"><i class="d"></i>TagManager.cs</div>
   <div class="l3"><i></i>Player Scripts</div>
   <div class="l4"><i class="d"></i>EngineFlow.cs</div><div class="l4"><i class="d"></i>PlayerHealth.cs</div><div class="l4"><i class="d"></i>PlayerMoveKeyboard.cs</div><div class="l4"><i class="d"></i>PlayerUpgrades.cs</div>
   <div class="l3"><i></i>Weapon Scripts</div>
   <div class="l4"><i class="d"></i>Projectile.cs</div><div class="l4"><i class="d"></i>ProjectileLifeTime.cs</div><div class="l4"><i class="d"></i>WeaponManager.cs</div><div class="l4"><i class="d"></i>WeaponManagerPool.cs</div><div class="l4"><i class="d"></i>WeaponUpgrades.cs</div>
   <div class="l1"><i></i>Sound</div><div class="l1"><i></i>Sprites</div>
  </div></div>
 <div class="tabs"><div class="tab" style="left:15px;width:54px">MeteorFXMovement.cs</div><div class="tab" style="left:73px;width:55px">MeteorFXSpawner.cs</div><div class="tab" style="left:132px;width:56px">MainMenuFXLifeTime.cs</div><div class="tab on" style="left:191px;width:56px">SpaceShipFXMovement.cs</div><div class="tab" style="left:250px;width:56px">ShipFXSpawner.cs</div></div>
 <div class="bc">SpaceShipFXMovement  ›  SetMovement(bool verticalMovement, bool horizontalMovement, bool moveNegative)</div>
 <div class="code"><div class="gut"></div><div class="guide" style="left:38px"></div>
<pre class="ln" style="top:-2.7px">4
5
6
7
8
9
10
11
12
13
14
15
16
17
18
19
20
21
22
23
24
25
26
27
28
29
30
31
32
33
34
35
36
37
38</pre>
<pre class="src" style="top:-2.7px">
<span class="k">public</span> <span class="k">class</span> <span class="t">SpaceShipFXMovement</span> : <span class="t">MonoBehaviour</span>
{

    [<span class="t">SerializeField</span>]
    <span class="k">private</span> <span class="k">float</span> minSpeed = <span class="n">5f</span>, maxSpeed = <span class="n">10f</span>;

    <span class="k">private</span> <span class="k">float</span> moveSpeed;

    <span class="k">private</span> <span class="t">Vector3</span> tempPos;

    <span class="k">private</span> <span class="k">bool</span> moveVertical, moveHorizontal;

    <span class="k">private</span> <span class="k">void</span> <span class="m">Awake</span>()
    {
        moveSpeed = <span class="t">Random</span>.<span class="m">Range</span>(minSpeed, maxSpeed);
    }

    <span class="k">private</span> <span class="k">void</span> <span class="m">Update</span>()
    {
        <span class="m">MoveVertical</span>();
        <span class="m">MoveHorizontal</span>();
    }

    <span class="k">void</span> <span class="m">MoveVertical</span>()
    {

        <span class="k">if</span> (!moveVertical)
            <span class="k">return</span>;

        tempPos = transform.position;
        tempPos.y += moveSpeed * <span class="t">Time</span>.deltaTime;
        transform.position = tempPos;
    }
</pre></div>
 <div class="rs"></div><div class="vsb" style="top:42px;height:95px"></div>
 <div class="a" style="left:88px;top:326px;width:490px;height:2px;background:#444"></div>
 <div class="st"></div>
</div>

<!-- ============ CELL 8 UNITY (600,674) ============ -->
<div class="cell ucell" style="left:600px;top:674px">
 <div class="mb"><b>  Unity</b>   File   Edit   Assets   GameObject   Component   Window   Help</div>
 <div class="mbr">◉ ✦ ◍ ▮ ◌ 93% ⊡ ✱ ≋ ⌕ ▤  Sat 17 Mar 08:41</div>
 <div class="ut">MainMenu - Space Shooter - PC, Mac &amp; Linux Standalone - Unity 2020.3.11f1 Personal (Personal) &lt;Metal&gt;</div>
 <div class="dot" style="left:3px;top:9px;background:#555"></div><div class="dot" style="left:9px;top:9px;background:#555"></div><div class="dot" style="left:15px;top:9px;background:#555"></div>
 <div class="utool"><div class="ub" style="left:3px;width:65px"></div><div class="ub" style="left:70px;width:40px"></div><div class="ub" style="left:112px;width:8px"></div>
  <div class="tiny" style="left:282px;top:2px;font-size:4px">▶  ❚❚  ▸|</div>
  <div class="ub" style="left:490px;width:8px"></div><div class="ub" style="left:503px;width:8px"></div><div class="ub" style="left:513px;width:25px"></div><div class="ub" style="left:540px;width:22px"></div><div class="ub" style="left:565px;width:33px"></div></div>
 <div class="a" style="left:228px;top:7px;width:145px;height:11px;background:#0c0c0c;border-radius:2px"></div>
 <div class="dot" style="left:237px;top:11px;background:#e03030"></div><div class="dot" style="left:249px;top:11px;background:#e0d030"></div><div class="dot" style="left:261px;top:11px;background:#40c040"></div>
 <div class="tiny" style="left:273px;top:9.5px;font-size:4.5px;color:#aaa">⤨   ⁄  ⁄  ▭  ◯  T   ⌫</div>
 <div class="phead" style="left:0;top:24px;width:301px">Scene   Game   Animation   Animator   Project Settings   Preferences   Package Manager   Asset Store</div>
 <div class="a" style="left:0;top:30px;width:301px;height:5px;background:#353535"></div>
 <div class="scene">
  <div class="game" style="left:48px;top:36px;width:167px;height:97px"></div>
  <div class="a" style="left:131px;top:2px;width:1px;height:175px;background:#8a8a8a"></div>
  <div class="a" style="left:131px;top:84px;width:170px;height:1px;background:#8a8a8a"></div>
  <div class="a" style="left:130px;top:1px;width:2px;height:5px;background:#8ee05a"></div>
  <div class="a" style="left:132px;top:26px;width:25px;height:1px;background:#e04040"></div>
  <div class="a" style="left:133px;top:20px;width:5px;height:5px;background:#4a6ab0"></div>
  <div class="a" style="left:129px;top:32px;width:4px;height:3px;background:#d03030"></div>
 </div>
 <div class="a" style="left:301px;top:24px;width:2px;height:186px;background:#191919"></div>
 <div class="phead" style="left:303px;top:24px;width:137px">≡ Hierarchy</div>
 <div class="a" style="left:303px;top:30px;width:137px;height:5px;background:#333"></div>
 <div class="a" style="left:303px;top:35px;width:8px;height:175px;background:#2e2e2e"></div>
 <div class="a" style="left:311px;top:78.5px;width:129px;height:4.7px;background:#4a4a4a"></div>
 <div class="utx" style="left:316px;top:35.5px">▾ MainMenu
    Main Camera
    EventSystem
    <span style="color:#6fb0ff">Game Space Effect</span>
    <span style="color:#6fb0ff">GameBG Scaling</span>
  ▸ Main Menu Canvas
  ▸ Highscore Menu Canvas
    Meteor FX Spawner Up
    Meteor FX Spawner Down
    Space Ship Spawner Up
    Space Ship Spawner Down
    Space Ship Spawner Right
    Space Ship Spawner Left</div>
 <div class="a" style="left:440px;top:24px;width:1px;height:306px;background:#191919"></div>
 <div class="phead" style="left:441px;top:24px;width:159px">ⓘ Inspector</div>
 <div class="fld" style="left:460px;top:32px;width:120px"></div><div class="utx" style="left:461px;top:32px">Space Ship Spawner Up</div>
 <div class="utx" style="left:453px;top:39px">Tag  Untagged                          Layer  Default</div>
 <div class="a" style="left:441px;top:47px;width:159px;height:5px;background:#3e3e3e"></div><div class="utx" style="left:446px;top:47px">▾ ⊹     Transform</div>
 <div class="utx" style="left:446px;top:54px">Position
Rotation
Scale</div>
 <div class="utx" style="left:506px;top:54px">X 0        Y 30        Z 0
X 0        Y 0         Z 0
X 1        Y 1         Z 1</div>
 <div class="a" style="left:441px;top:74.5px;width:159px;height:5px;background:#3e3e3e"></div><div class="utx" style="left:446px;top:74.5px">▾ ▣ ✓ Ship FX Spawner (Script)</div>
 <div class="utx" style="left:446px;top:81px;color:#888">Script                                 ShipFXSpawner</div>
 <div class="utx" style="left:443px;top:87px">▾ Ships</div>
 <div class="a" style="left:448px;top:94px;width:148px;height:11px;background:#333"></div>
 <div class="utx" style="left:454px;top:94.5px">Element 0                          ◉ Ship 1
Element 1                          ◉ Ship 2</div>
 <div class="utx" style="left:446px;top:112.5px">Spawn Pos Enum
Min Spawn Time
Max Spawn Time
Min X
Max X
Min Y
Max Y</div>
 <div class="fld" style="left:506px;top:113px;width:92px;background:#444"></div>
 <div class="utx" style="left:507px;top:112.5px">Up
5
10
-30
30
-27
27</div>
 <div class="a" style="left:487px;top:159px;width:66px;height:6px;background:#585858;border-radius:1px"></div><div class="utx" style="left:507px;top:159.5px">Add Component</div>
 <div class="a" style="left:0;top:210px;width:440px;height:1px;background:#191919"></div>
 <div class="phead" style="left:0;top:211px;width:440px">▤ Project   ▤ Console</div>
 <div class="a" style="left:0;top:217px;width:440px;height:5px;background:#333"></div>
 <div class="a" style="left:56px;top:222px;width:1px;height:108px;background:#222"></div>
 <div class="utx" style="left:2px;top:221px">▾ Assets
   Fonts
   Materials
 ▾ Prefabs
     BG
     Collectables
     Effects
   ▸ Enemy Prefabs
     Main Menu FX
     Meteor Prefabs
     Player
     Player Effects
   ▾ Projectiles
       Projectile Pool
   Scenes
 ▾ Scripts
     Enemy Scripts
     Gameplay Controllers
     Main Menu FX Scripts
     Manager Scripts
     Player Scripts
     Weapon Scripts
 ▸ Sound</div>
 <div class="utx" style="left:55px;top:222px">  Assets › Scripts › Main Menu FX Scripts</div>
 <div class="utx" style="left:63px;top:227.5px">▣ MainMenuFXLifeTime
▣ MeteorFXMovement
▣ MeteorFXSpawner
▣ ShipFXSpawner
▣ SpaceShipFXMovement</div>
 <div class="a" style="left:0;top:330px;width:600px;height:7px;background:#222"></div>
</div>

<!-- ============ CELL 9 (1200,674) ============ -->
<div class="cell" style="left:1200px;top:674px">
 <div class="mb"><b>  Visual Studio</b>   File   Edit   View   Search   Project   Build   Run   Version Control   Tools   Window   Help</div>
 <div class="mbr">◉ ✦ ◍ ▮ ◌ 93% ⊡ ✱ ≋ ⌕ ▤  Sat 17 Mar 08:45</div>
 <div class="tb"><div class="dot r" style="left:3px;top:4px"></div><div class="dot y" style="left:9px;top:4px"></div><div class="dot g" style="left:15px;top:4px"></div>
  <div class="tiny" style="left:30px;top:3px">▶   ▢ Debug ›  ⊙ Attach to Unity</div>
  <div class="a" style="left:224px;top:3px;width:163px;height:6px;background:#3a3a3a"></div>
  <div class="tiny" style="left:518px;top:3px;color:#999">⌕ Press '⌘.' to search</div></div>
 <div class="sp"><div class="sph"><span class="tiny" style="left:3px;top:2px">Solution</span></div>
  <div class="sel" style="top:181px"></div>
  <div class="tree">
   <div class="l0"><i></i>Space Shooter</div><div class="l1"><i></i>Assets</div>
   <div class="l2"><i></i>Fonts</div><div class="l2"><i></i>Materials</div><div class="l2"><i></i>Prefabs</div><div class="l2"><i></i>Scenes</div><div class="l2"><i></i>Scripts</div>
   <div class="l3"><i></i>Enemy Scripts</div>
   <div class="l4"><i class="d"></i>DelayCollisionHandler.cs</div><div class="l4"><i class="d"></i>EnemyMultiTime.cs</div><div class="l4"><i class="d"></i>EnemyHealth.cs</div><div class="l4"><i class="d"></i>EnemyMovement.cs</div><div class="l4"><i class="d"></i>EnemyMovementByPoints.cs</div><div class="l4"><i class="d"></i>EnemyMovementRandom.cs</div><div class="l4"><i class="d"></i>EnemySpawner.cs</div><div class="l4"><i class="d"></i>MeteorMovement.cs</div><div class="l4"><i class="d"></i>MeteorSpawner.cs</div>
   <div class="l3"><i></i>Gameplay Controllers</div>
   <div class="l4"><i class="d"></i>BGScroller.cs</div><div class="l4"><i class="d"></i>Collectables.cs</div><div class="l4"><i class="d"></i>Collector.cs</div><div class="l4"><i class="d"></i>GameplayUIController.cs</div><div class="l4"><i class="d"></i>GameplayUIHandler.cs</div><div class="l4"><i class="d"></i>SoundManager.cs</div>
   <div class="l3"><i></i>Main Menu FX Scripts</div>
   <div class="l4"><i class="d"></i>MainMenuFXLifeTime.cs</div><div class="l4"><i class="d"></i>MeteorFXMovement.cs</div><div class="l4"><i class="d"></i>MeteorFXSpawner.cs</div><div class="l4"><i class="d"></i>ShipFXSpawner.cs</div><div class="l4"><i class="d"></i>SpaceShipFXMovement.cs</div>
   <div class="l3"><i></i>Manager Scripts</div><div class="l4"><i class="d"></i>TagManager.cs</div>
   <div class="l3"><i></i>Player Scripts</div>
   <div class="l4"><i class="d"></i>EngineFlow.cs</div><div class="l4"><i class="d"></i>PlayerHealth.cs</div><div class="l4"><i class="d"></i>PlayerMoveKeyboard.cs</div><div class="l4"><i class="d"></i>PlayerUpgrades.cs</div>
   <div class="l3"><i></i>Weapon Scripts</div>
   <div class="l4"><i class="d"></i>Projectile.cs</div><div class="l4"><i class="d"></i>ProjectileLifeTime.cs</div><div class="l4"><i class="d"></i>WeaponManager.cs</div><div class="l4"><i class="d"></i>WeaponManagerPool.cs</div><div class="l4"><i class="d"></i>WeaponUpgrades.cs</div>
   <div class="l1"><i></i>Sound</div><div class="l1"><i></i>Sprites</div>
  </div></div>
 <div class="tabs"><div class="tab" style="left:15px;width:54px">MeteorFXMovement.cs</div><div class="tab" style="left:73px;width:55px">MeteorFXSpawner.cs</div><div class="tab" style="left:132px;width:56px">MainMenuFXLifeTime.cs</div><div class="tab on" style="left:191px;width:56px">SpaceShipFXMovement.cs</div><div class="tab" style="left:250px;width:56px">ShipFXSpawner.cs</div></div>
 <div class="bc">SpaceShipFXMovement  ›  MoveVertical()</div>
 <div class="code"><div class="gut"></div><div class="guide" style="left:38px"></div>
<pre class="ln" style="top:-1.4px">21
22
23
24
25
26
27
28
29
30
31
32
33
34
35
36
37
38
39
40
41
42
43
44
45
46
47
48
49
50
51
52
53
54
55</pre>
<pre class="src" style="top:-1.4px">    }

    <span class="k">void</span> <span class="m">MoveVertical</span>()
    {

        <span class="k">if</span> (!moveVertical)
            <span class="k">return</span>;

        tempPos = transform.position;
        tempPos.y += <span class="s">moveSpeed</span> * <span class="t">Time</span>.deltaTime;
        transform.position = tempPos;
    }

    <span class="k">void</span> <span class="m">MoveHorizontal</span>()
    {

        <span class="k">if</span> (!moveHorizontal)
            <span class="k">return</span>;

        tempPos = transform.position;
        tempPos.x += <span class="s">moveSpeed</span> * <span class="t">Time</span>.deltaTime;
        transform.position = tempPos;
    }

    <span class="k">public</span> <span class="k">void</span> <span class="m">SetMovement</span>(<span class="k">bool</span> verticalMovement, <span class="k">bool</span> horizontalMovement, <span class="k">bool</span> moveNegative)
    {

        moveVertical = verticalMovement;
        moveHorizontal = horizontalMovement;

        <span class="hg">moveSpeed</span> = <span class="t">Random</span>.<span class="m">Range</span>(minSpeed, maxSpeed);

        <span class="k">if</span> (moveNegative)
            <span class="hg">moveSpeed</span> *= -<span class="n">1f</span>;
</pre></div>
 <div class="rs"></div><div class="vsb" style="top:90px;height:97px"></div>
 <div class="a" style="left:88px;top:326px;width:490px;height:2px;background:#444"></div>
 <div class="st"></div>
</div>

</body></html>
